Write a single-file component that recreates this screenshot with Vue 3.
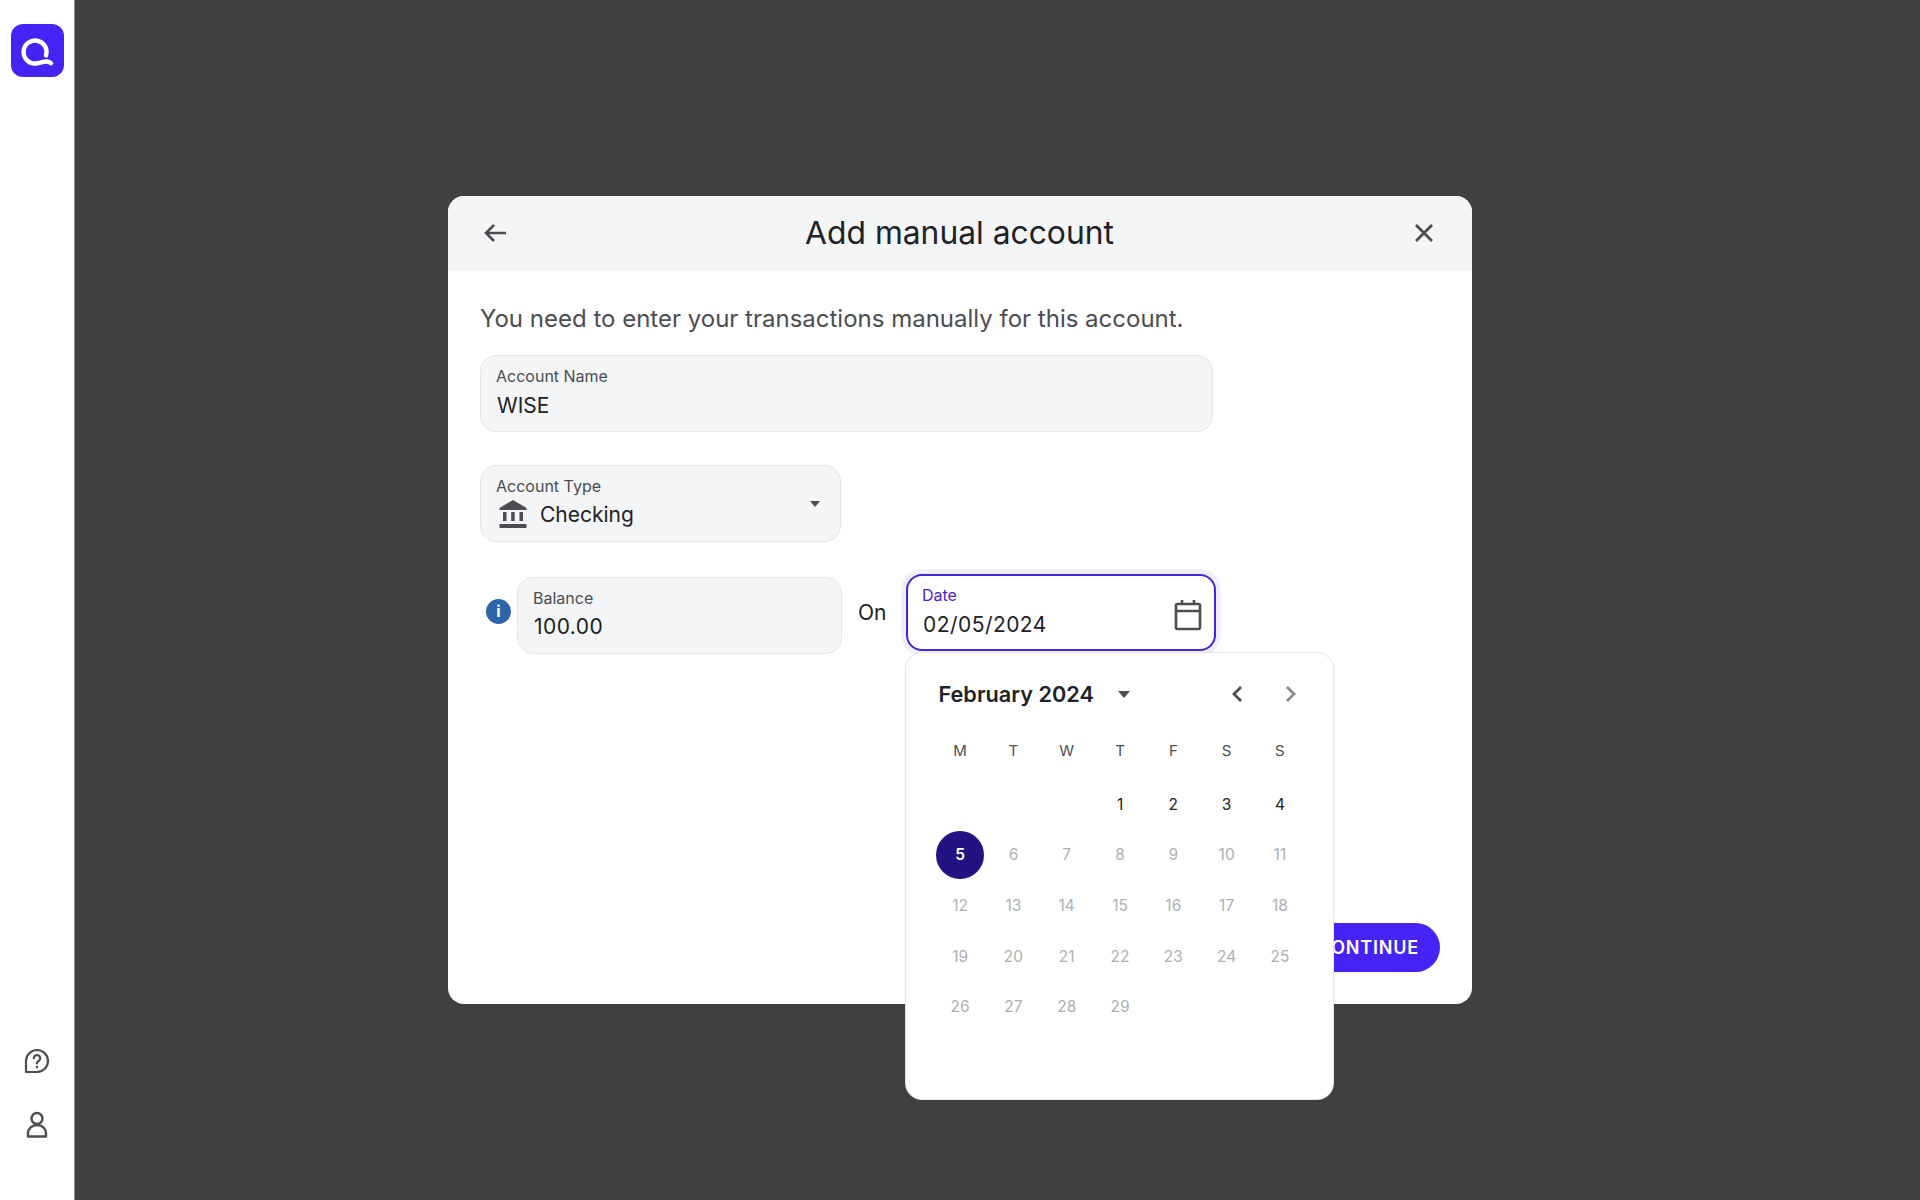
<template>
  <div class="page">
    <aside class="sidebar">
      <div class="logo">
        <svg width="53" height="53" viewBox="0 0 53 53" fill="none" stroke="#fff" stroke-linecap="round">
          <path d="M35 31.500A11.500 11.500 0 1 0 24 39.500C29 39.500 32 37 36 37.500c1.500.2 3 .8 4 1.800" stroke-width="4.400" />
        </svg>
      </div>
      <div class="side-bottom">
        <svg class="side-icon" width="26" height="26" viewBox="0 0 26 26" fill="none" stroke="#4b4d50" stroke-width="2.200">
          <path d="M2 24V13A11 11 0 1 1 13 24Z" stroke-linejoin="round" />
          <path d="M9.800 10.200a3.200 3.200 0 1 1 4.800 2.800c-1 .6-1.600 1.200-1.600 2.400" stroke-linecap="round" />
          <circle cx="13" cy="19" r="1.200" fill="#4b4d50" stroke="none" />
        </svg>
        <svg class="side-icon" width="26" height="28" viewBox="0 0 26 28" fill="none" stroke="#4b4d50" stroke-width="2.400">
          <circle cx="13" cy="7.500" r="5.500" />
          <path d="M4 25.500v-3C4 17.500 8 14 13 14s9 3.500 9 8.500v3Z" stroke-linejoin="round" />
        </svg>
      </div>
    </aside>

    <main class="backdrop">
      <section class="modal">
        <header class="modal-header">
          <svg width="24" height="24" viewBox="0 0 24 24" fill="none" stroke="#4b4d50" stroke-width="2.600">
            <path d="M23 12H3M11 4l-8 8 8 8" />
          </svg>
          <h1>Add manual account</h1>
          <svg width="24" height="24" viewBox="0 0 24 24" fill="none" stroke="#4b4d50" stroke-width="2.800">
            <path d="M4 4l16 16M20 4L4 20" />
          </svg>
        </header>

        <div class="modal-body">
          <p class="intro">You need to enter your transactions manually for this account.</p>

          <div class="field name-field">
            <label>Account Name</label>
            <div class="value">WISE</div>
          </div>

          <div class="field type-field">
            <label>Account Type</label>
            <div class="value type-value">
              <svg width="28" height="28" viewBox="0 0 28 28" fill="#4b4d50">
                <path d="M14 0L27.500 8v2H.500V8Z" />
                <rect x="4" y="12" width="3.500" height="9" />
                <rect x="12.200" y="12" width="3.500" height="9" />
                <rect x="20.500" y="12" width="3.500" height="9" />
                <rect x="0.500" y="24" width="27" height="4" />
              </svg>
              <span>Checking</span>
            </div>
            <span class="type-caret"></span>
          </div>

          <div class="balance-row">
            <span class="info">i</span>
            <div class="field balance-field">
              <label>Balance</label>
              <div class="value">100.00</div>
            </div>
            <span class="on">On</span>
            <div class="date-wrap">
              <div class="field date-field">
                <label>Date</label>
                <div class="value">02/05/2024</div>
                <svg class="cal-icon" width="30" height="32" viewBox="0 0 30 32" fill="none" stroke="#4b4d50" stroke-width="2.600">
                  <rect x="3" y="5" width="24" height="25" rx="1.500" />
                  <path d="M3 12h24M9 1v5M21 1v5" />
                </svg>
              </div>

              <div class="calendar">
                <div class="cal-head">
                  <span class="month">February 2024</span>
                  <span class="month-caret"></span>
                  <svg class="prev" width="14" height="18" viewBox="0 0 14 18" fill="none" stroke="#4b4d50" stroke-width="2.800">
                    <path d="M11 2L4 9l7 7" />
                  </svg>
                  <svg class="next" width="14" height="18" viewBox="0 0 14 18" fill="none" stroke="#8a8c8f" stroke-width="2.800">
                    <path d="M3 2l7 7-7 7" />
                  </svg>
                </div>
                <div class="week">
                  <span v-for="(d, i) in weekdays" :key="i">{{ d }}</span>
                </div>
                <div class="days">
                  <span v-for="n in 3" :key="'b' + n"></span>
                  <span v-for="d in days" :key="d" class="day" :class="{ enabled: d < 5, selected: d === 5 }">
                    <i>{{ d }}</i>
                  </span>
                </div>
              </div>
            </div>
          </div>
        </div>

        <footer class="modal-footer">
          <button class="continue">CONTINUE</button>
        </footer>
      </section>
    </main>
  </div>
</template>

<script setup>
const weekdays = ['M', 'T', 'W', 'T', 'F', 'S', 'S'];
const days = Array.from({ length: 29 }, (_, i) => i + 1);
</script>

<style>
html, body {
  margin: 0;
  height: 100%;
}
</style>

<style scoped>
.page {
  display: flex;
  height: 1200px;
  font-family: Inter, "Noto Sans", sans-serif;
  color: #202225;
  overflow: hidden;
}
.sidebar {
  width: 75px;
  flex: none;
  background: #fff;
  display: flex;
  flex-direction: column;
  justify-content: space-between;
  align-items: center;
  padding: 24px 0 61px;
  box-sizing: border-box;
  border-right: 1px solid #8f8f8f;
}
.logo {
  width: 53px;
  height: 53px;
  border-radius: 12px;
  background: #4622f5;
}
.logo svg {
  display: block;
}
.side-bottom {
  display: flex;
  flex-direction: column;
  align-items: center;
  gap: 37px;
}
.side-icon {
  display: block;
}
.backdrop {
  flex: 1;
  background: #404040;
  padding-top: 196px;
  padding-left: 373px;
}
.modal {
  width: 1024px;
  height: 808px;
  background: #fff;
  border-radius: 16px;
  display: flex;
  flex-direction: column;
}
.modal-header {
  height: 75px;
  flex: none;
  background: #f3f5f6;
  border-radius: 16px 16px 0 0;
  display: flex;
  align-items: center;
  justify-content: space-between;
  padding: 0 36px 2px 35px;
  box-sizing: border-box;
}
.modal-header h1 {
  margin: 0;
  font-size: 31.800px;
  font-weight: 400;
  color: #202225;
}
.modal-body {
  flex: 1;
  padding: 0 32px;
}
.intro {
  margin: 33px 0 21px;
  font-size: 24px;
  line-height: 30px;
  color: #4b4d50;
}
.field {
  position: relative;
  box-sizing: border-box;
  height: 77px;
  background: #f3f5f6;
  border: 1px solid #e4e6e8;
  border-radius: 16px;
  padding: 10px 15px 0;
}
.field label {
  display: block;
  font-size: 16px;
  line-height: 20px;
  color: #4b4d50;
}
.value {
  margin-top: 6px;
  font-size: 21px;
  line-height: 27px;
  padding-left: 1px;
  color: #202225;
}
.name-field {
  width: 733px;
}
.type-field {
  width: 361px;
  margin-top: 33px;
}
.type-value {
  margin-top: 2px;
  display: flex;
  align-items: center;
  gap: 13px;
  height: 32px;
  padding-left: 3px;
}
.type-caret {
  position: absolute;
  right: 20px;
  top: 35px;
  border-left: 5.500px solid transparent;
  border-right: 5.500px solid transparent;
  border-top: 6px solid #4b4d50;
}
.balance-row {
  display: flex;
  align-items: flex-start;
  margin-top: 32px;
}
.info {
  width: 25px;
  height: 25px;
  margin: 25px 6px 0 6px;
  border-radius: 50%;
  background: #2c65a8;
  color: #fff;
  font-size: 16px;
  font-weight: 700;
  line-height: 25px;
  text-align: center;
  flex: none;
}
.balance-field {
  width: 325px;
  margin-top: 3px;
}
.balance-field .value {
  margin-top: 5px;
}
.balance-field .value,
.date-field .value {
  letter-spacing: 0.45px;
}
.on {
  font-size: 21px;
  line-height: 27px;
  margin: 25px 0 0 16px;
  width: 48px;
}
.date-wrap {
  position: relative;
}
.date-field {
  width: 310px;
  height: 77px;
  background: #fff;
  border: 2px solid #4622d9;
  box-shadow: 0 0 0 5px #f1effd;
  padding: 9px 14px 0;
}
.date-field label {
  color: #4622d9;
}
.cal-icon {
  position: absolute;
  right: 11px;
  top: 23px;
}
.calendar {
  position: absolute;
  left: 0;
  top: 79px;
  width: 427px;
  height: 446px;
  box-sizing: border-box;
  background: #fff;
  border-radius: 16px;
  box-shadow: 0 0 0 1px #e6e7e9, 0 2px 4px rgba(0, 0, 0, 0.06);
  padding: 28px 0 0 27.500px;
  z-index: 2;
}
.cal-head {
  display: flex;
  align-items: center;
  height: 26px;
  padding-left: 5px;
}
.month {
  font-size: 21.700px;
  font-weight: 600;
  color: #202225;
}
.month-caret {
  margin-left: 24px;
  border-left: 6.500px solid transparent;
  border-right: 6.500px solid transparent;
  border-top: 7px solid #4b4d50;
}
.prev {
  margin-left: auto;
  margin-right: 40px;
}
.next {
  margin-right: 35px;
}
.week {
  display: grid;
  grid-template-columns: repeat(7, 53.300px);
  margin-top: 31px;
  height: 26px;
  line-height: 26px;
  font-size: 15px;
  color: #4b4d50;
  text-align: center;
}
.days {
  display: grid;
  grid-template-columns: repeat(7, 53.300px);
  grid-auto-rows: 50.600px;
  margin-top: 15.500px;
}
.day {
  display: flex;
  align-items: center;
  justify-content: center;
  font-size: 15.500px;
  color: #aeb0b3;
}
.day i {
  font-style: normal;
  width: 48px;
  height: 48px;
  line-height: 48px;
  text-align: center;
  border-radius: 50%;
}
.day.enabled {
  color: #202225;
}
.day.selected i {
  background: #221282;
  color: #fff;
  font-weight: 600;
}
.modal-footer {
  display: flex;
  justify-content: flex-end;
  padding: 0 32px 32px;
}
.continue {
  height: 49px;
  padding: 0 21px 0 23px;
  border: none;
  border-radius: 25px;
  background: #4622f5;
  color: #fff;
  font-family: inherit;
  font-size: 18px;
  font-weight: 600;
  letter-spacing: 0.8px;
}
</style>
